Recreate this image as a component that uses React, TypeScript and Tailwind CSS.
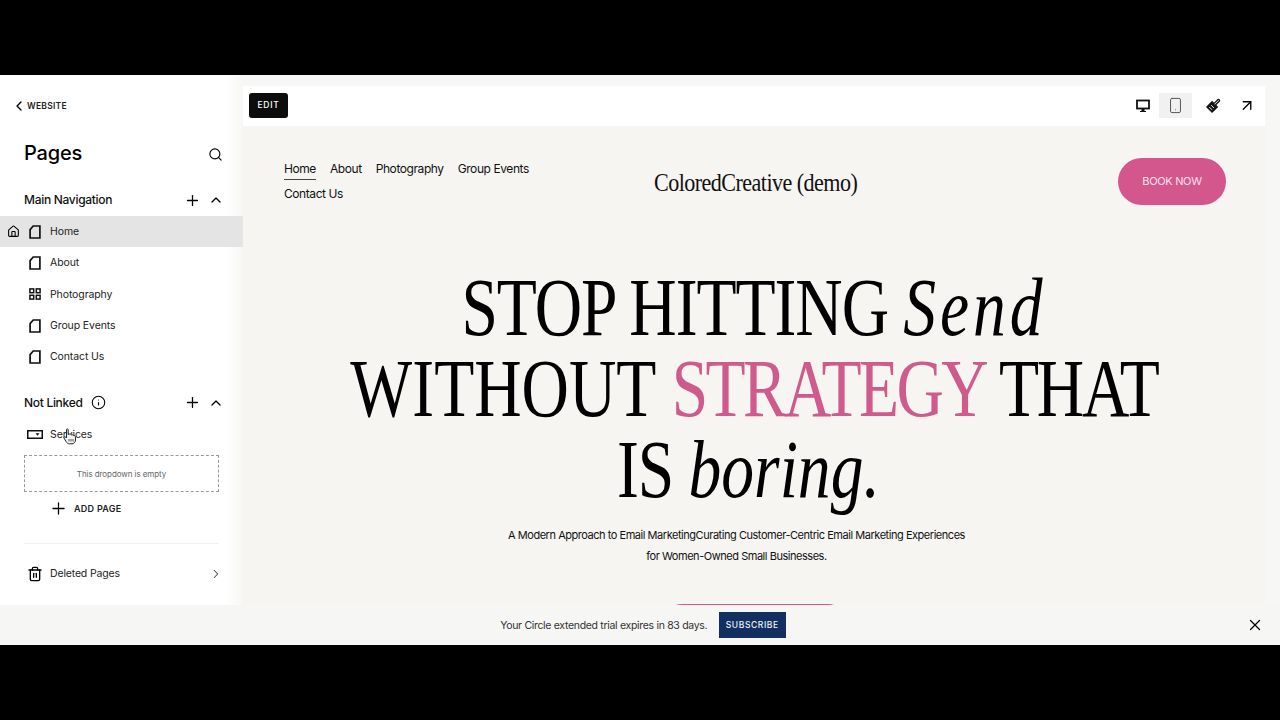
import type { ReactNode } from 'react';
import { ChevronLeft, ChevronRight, ChevronUp, Search, Plus, House, Info, Trash2, X, Smartphone, ArrowUpRight } from 'lucide-react';

function PageIcon() {
  return (
    <svg width="12" height="14" viewBox="0 0 12 14" fill="none" stroke="#111" strokeWidth="1.7">
      <path d="M4.2 1H10.9V13H1.1V4.6Z" />
    </svg>
  );
}

function GridIcon() {
  return (
    <svg width="12" height="12" viewBox="0 0 12 12" fill="none" stroke="#111" strokeWidth="1.5">
      <rect x="0.9" y="0.9" width="3.8" height="3.8" />
      <rect x="7.3" y="0.9" width="3.8" height="3.8" />
      <rect x="0.9" y="7.3" width="3.8" height="3.8" />
      <rect x="7.3" y="7.3" width="3.8" height="3.8" />
    </svg>
  );
}

function DropdownIcon() {
  return (
    <svg width="16" height="9" viewBox="0 0 16 9" fill="none">
      <rect x="0.75" y="0.75" width="14.5" height="7.5" stroke="#111" strokeWidth="1.5" />
      <path d="M8.5 3.2H12.5L10.5 5.8Z" fill="#111" />
    </svg>
  );
}

function MonitorIcon() {
  return (
    <svg width="14" height="14" viewBox="0 0 14 14" fill="none">
      <rect x="1" y="1.5" width="12" height="8" stroke="#111" strokeWidth="1.8" />
      <path d="M5.5 10H8.5V12H10V13H4V12H5.5Z" fill="#111" />
    </svg>
  );
}

function BrushIcon() {
  return (
    <svg width="15" height="15" viewBox="0 0 16 16" fill="none" stroke="#111" strokeWidth="1.4">
      <path d="M1 9.5L6.5 4L12 9.5L6.5 15Z" fill="#111" />
      <path d="M3.4 9.6L6.4 12.6M5.4 7.6L8.4 10.6" stroke="#fff" strokeWidth="1" />
      <path d="M8.5 6L12.8 1.7C13.6 1.1 14.9 2.3 14.3 3.2L10 7.5" fill="#fff" />
    </svg>
  );
}

function HandCursor() {
  return (
    <svg className="absolute left-[63px] top-[9px]" width="14" height="17" viewBox="0 0 14 17">
      <path d="M3.5 1.5C3.5 0.6 5.2 0.6 5.2 1.5V6.5L6.5 6C7.5 6 8 6.3 8.3 6.8C9.3 6.5 10 6.8 10.3 7.4C11.5 7.2 12.5 8 12.5 9.2V12C12.5 14 11 15.8 9 15.8H6.5C5 15.8 4 15 3 13.5L1 10C0.6 9 1.7 8.2 2.6 9L3.5 10Z" fill="#f2f2f2" stroke="#222" strokeWidth="1" />
      <path d="M6 11V13.5M8 11V13.5M10 11V13.5" stroke="#444" strokeWidth="0.9" />
    </svg>
  );
}

function PageRow({ label, active, icon }: { label: string; active?: boolean; icon?: ReactNode }) {
  return (
    <div className={`flex h-[31.4px] items-center ${active ? 'bg-[#e4e4e4]' : ''}`}>
      <span className="flex w-[27px] justify-start pl-[7px]">
        {active && <House size={13} strokeWidth={2} className="text-black" />}
      </span>
      <span className="flex w-[16px] justify-center">{icon ?? <PageIcon />}</span>
      <span className="ml-[7px] text-[10.5px] tracking-[-0.01em] text-[#222]">{label}</span>
    </div>
  );
}

function SectionHead({ title, info }: { title: string; info?: boolean }) {
  return (
    <div className="flex h-[20px] items-center pl-[24px] pr-[19px]">
      <span className="text-[12px] font-medium tracking-[-0.025em] text-[#111]">{title}</span>
      {info && <Info size={15} strokeWidth={1.7} className="ml-[8px] text-black" />}
      <Plus size={17} strokeWidth={1.8} className="ml-auto mr-[7px] text-black" />
      <ChevronUp size={16} strokeWidth={2} className="text-black" />
    </div>
  );
}

function Sidebar() {
  return (
    <aside className="flex h-[530px] w-[243px] shrink-0 flex-col bg-linear-to-r from-white from-[93%] to-[#f7f7f5] pt-[23px]" style={{ fontFamily: 'Inter, sans-serif' }}>
      <div className="flex h-[16px] items-center pl-[11px]">
        <ChevronLeft size={16} strokeWidth={2} className="text-black" />
        <span className="text-[8.5px] font-semibold tracking-[0.03em] text-[#222]">WEBSITE</span>
      </div>
      <div className="mt-[25px] flex items-center justify-between pl-[24px] pr-[20px]">
        <h1 className="text-[20px] font-medium leading-[28px] tracking-[-0.01em] text-black">Pages</h1>
        <Search size={15} strokeWidth={1.8} className="mt-[2px] text-black" />
      </div>
      <div className="mt-[23px]"><SectionHead title="Main Navigation" /></div>
      <div className="mt-[6px]">
        <PageRow label="Home" active />
        <PageRow label="About" />
        <PageRow label="Photography" icon={<GridIcon />} />
        <PageRow label="Group Events" />
        <PageRow label="Contact Us" />
      </div>
      <div className="mt-[20px]"><SectionHead title="Not Linked" info /></div>
      <div className="relative mt-[6px]">
        <PageRow label="Services" icon={<DropdownIcon />} />
        <HandCursor />
      </div>
      <div className="ml-[24px] mt-[5px] flex h-[37px] w-[195px] items-center justify-center border border-dashed border-[#9a9a9a]">
        <span className="mt-px text-[8px] tracking-[-0.01em] text-[#666]">This dropdown is empty</span>
      </div>
      <div className="ml-[49px] mt-[7px] flex h-[19px] items-center">
        <Plus size={19} strokeWidth={1.6} className="text-black" />
        <span className="ml-[6px] text-[9px] font-semibold tracking-[0.03em] text-[#222]">ADD PAGE</span>
      </div>
      <div className="mx-[24px] mt-[25px] h-px bg-[#f1f1f1]" />
      <div className="mt-[22px] flex h-[16px] items-center pl-[27px] pr-[20px]">
        <Trash2 size={16} strokeWidth={2} className="text-black" />
        <span className="ml-[7px] text-[10.5px] tracking-[-0.015em] text-[#222]">Deleted Pages</span>
        <ChevronRight size={14} strokeWidth={1.8} className="ml-auto text-[#444]" />
      </div>
    </aside>
  );
}

function Toolbar() {
  return (
    <div className="flex h-[40px] shrink-0 items-center bg-white pb-[1px] pl-[6px] pr-[9px]" style={{ fontFamily: 'Inter, sans-serif' }}>
      <div className="flex h-[25px] w-[39px] items-center justify-center rounded-[3px] bg-[#0c0c0c] text-[8.5px] font-medium tracking-[0.08em] text-white">EDIT</div>
      <div className="ml-auto flex h-[25px] items-center bg-[#f1f1f1]">
        <span className="flex h-[25px] w-[33px] items-center justify-center bg-white">
          <MonitorIcon />
        </span>
        <span className="flex h-[25px] w-[33px] items-center justify-center">
          <Smartphone size={17} strokeWidth={1.4} className="text-[#555]" />
        </span>
      </div>
      <span className="ml-[13px] flex w-[16px] justify-center"><BrushIcon /></span>
      <span className="ml-[17px] flex w-[18px] justify-center"><ArrowUpRight size={21} strokeWidth={1.8} className="text-black" /></span>
    </div>
  );
}

function Preview() {
  return (
    <main className="flex h-[530px] flex-1 flex-col overflow-hidden border-r-[15px] border-t-[11px] border-[#f7f7f6] bg-[#f6f5f2]">
      <Toolbar />
      <div className="flex items-start pl-[41px] pr-[39px] pt-[30px]" style={{ fontFamily: 'Inter, sans-serif' }}>
        <nav className="flex w-[270px] flex-wrap gap-x-[14px] text-[12px] leading-[25px] tracking-[-0.035em] text-[#111]">
          <span className="underline decoration-[#444] underline-offset-[6px]">Home</span>
          <span>About</span>
          <span>Photography</span>
          <span>Group Events</span>
          <span>Contact Us</span>
        </nav>
        <div className="ml-[100px] mt-[3px] origin-left scale-x-[0.85] text-[26px] leading-[48px] tracking-[-0.025em] text-[#111]" style={{ fontFamily: '"Liberation Serif", serif' }}>ColoredCreative (demo)</div>
        <button className="ml-auto mt-[2px] h-[47px] w-[108px] rounded-[24px] bg-[#d3568d] text-[11px] tracking-[-0.03em] text-[#fbe3ee]">BOOK NOW</button>
      </div>
      <section className="mt-[60px] scale-x-[0.8] text-center text-[82px] leading-[81px] text-black" style={{ fontFamily: '"Liberation Serif", serif' }}>
        <div className="tracking-[-0.016em]">STOP HITTING <em className="tracking-[0.06em]">Send</em></div>
        <div>
          <span>WITHOUT </span>
          <span className="tracking-[-0.04em] text-[#cf5a8c]">STRATEGY</span>
          <span className="tracking-[-0.034em]"> THAT</span>
        </div>
        <div className="pr-[14px] tracking-[-0.016em]">IS <em className="tracking-[0em]">boring.</em></div>
      </section>
      <p className="mt-[15px] pr-[35px] text-center text-[11px] leading-[20.5px] tracking-[-0.042em] text-[#111]" style={{ fontFamily: 'Inter, sans-serif' }}>
        A Modern Approach to Email MarketingCurating Customer-Centric Email Marketing Experiences
        <br />
        for Women-Owned Small Businesses.
      </p>
      <div className="ml-[419px] mt-[37.5px] h-[20px] w-[186px] shrink-0 rounded-t-[24px] bg-[#d3568d]" />
    </main>
  );
}

export default function App() {
  return (
    <div className="flex h-[720px] w-[1280px] flex-col overflow-hidden bg-black">
      <div className="h-[75px] shrink-0 bg-black" />
      <div className="flex h-[530px] shrink-0 bg-[#f7f7f6]">
        <Sidebar />
        <Preview />
      </div>
      <div className="relative flex h-[40px] shrink-0 items-center justify-center gap-[11.5px] bg-[#f6f6f5] pl-[6px]" style={{ fontFamily: 'Inter, sans-serif' }}>
        <span className="mt-px text-[10.5px] tracking-[-0.03em] text-[#333]">Your Circle extended trial expires in 83 days.</span>
        <span className="flex h-[26px] w-[67px] items-center justify-center bg-[#12305f] text-[8.5px] font-medium tracking-[0.07em] text-[#eef2f8]">SUBSCRIBE</span>
        <X size={18} strokeWidth={1.6} className="absolute right-[16px] text-black" />
      </div>
      <div className="flex-1 bg-black" />
    </div>
  );
}
